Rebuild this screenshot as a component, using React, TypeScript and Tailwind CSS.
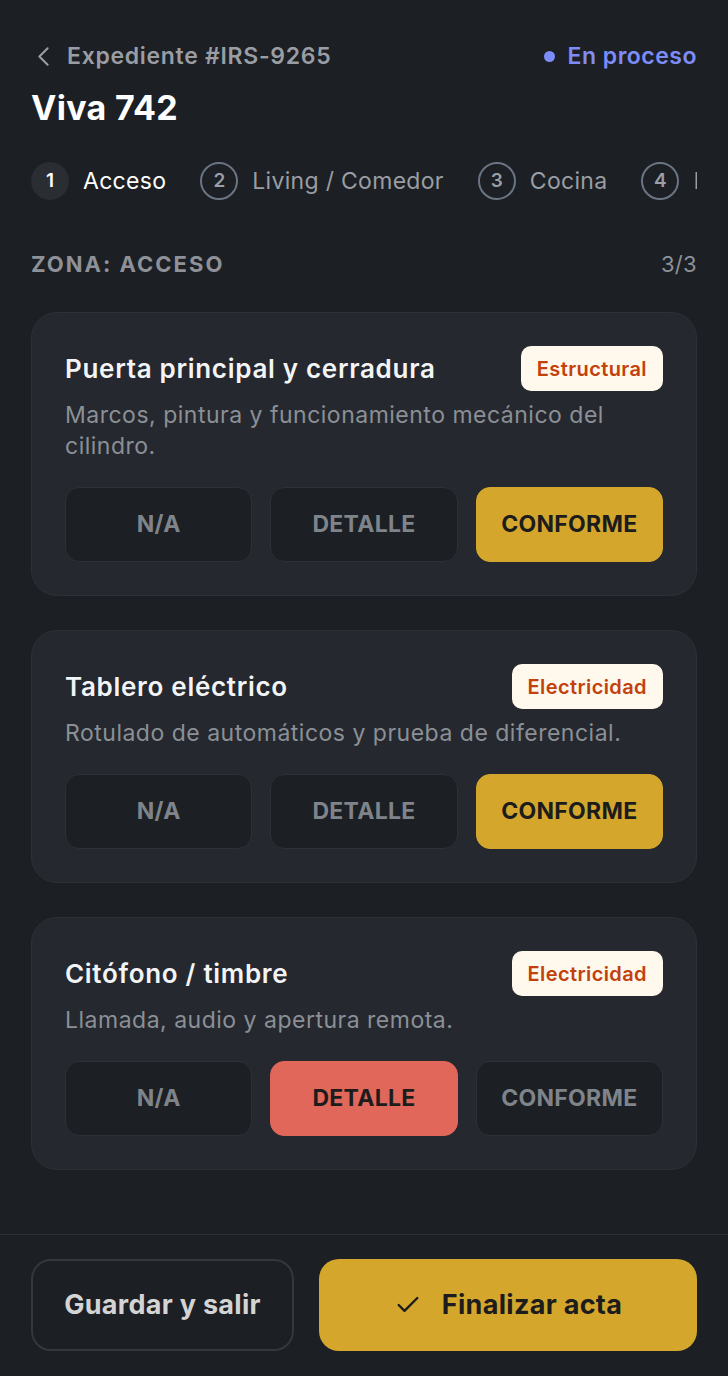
import { Check, ChevronLeft } from 'lucide-react';

type Estado = 'na' | 'detalle' | 'conforme';

interface Item {
  id: number;
  title: string;
  description: string;
  tag: string;
  estado: Estado;
}

const steps = ['Acceso', 'Living / Comedor', 'Cocina', 'Baño'];

const items: Item[] = [
  {
    id: 1,
    title: 'Puerta principal y cerradura',
    description: 'Marcos, pintura y funcionamiento mecánico del cilindro.',
    tag: 'Estructural',
    estado: 'conforme',
  },
  {
    id: 2,
    title: 'Tablero eléctrico',
    description: 'Rotulado de automáticos y prueba de diferencial.',
    tag: 'Electricidad',
    estado: 'conforme',
  },
  {
    id: 3,
    title: 'Citófono / timbre',
    description: 'Llamada, audio y apertura remota.',
    tag: 'Electricidad',
    estado: 'detalle',
  },
];

function OptionButton({ label, active, tone }: { label: string; active: boolean; tone: Estado }) {
  let cls = 'bg-[#1c1f23] border border-[#2d3036] text-[#7f848b]';
  if (active && tone === 'conforme') cls = 'bg-[#d4a72c] border border-[#d4a72c] text-[#1c1c1c]';
  if (active && tone === 'detalle') cls = 'bg-[#e0675a] border border-[#e0675a] text-[#1c1c1c]';
  return (
    <button className={`h-[75px] rounded-[14px] text-[23px] font-bold tracking-[0.3px] uppercase ${cls}`}>
      {label}
    </button>
  );
}

function ItemCard({ item }: { item: Item }) {
  return (
    <div className="rounded-[26px] border border-[#2d3036] bg-[#25282e] px-[33px] pt-[33px] pb-[33px]">
      <div className="flex items-center justify-between gap-4">
        <h3 className="text-[26px] font-semibold tracking-[0.7px] text-[#f3f4f6] leading-[32px]">{item.title}</h3>
        <span className="h-[45px] flex items-center px-[16px] rounded-[10px] bg-[#fff8ec] text-[20px] font-semibold tracking-[0.4px] text-[#c2410c]">
          {item.tag}
        </span>
      </div>
      <p className="mt-[9px] text-[23px] leading-[31px] tracking-[0.5px] text-[#8b9096]">{item.description}</p>
      <div className="mt-[25px] grid grid-cols-3 gap-[18px]">
        <OptionButton label="N/A" active={item.estado === 'na'} tone="na" />
        <OptionButton label="Detalle" active={item.estado === 'detalle'} tone="detalle" />
        <OptionButton label="Conforme" active={item.estado === 'conforme'} tone="conforme" />
      </div>
    </div>
  );
}

export default function App() {
  return (
    <main
      className="min-h-[1376px] flex flex-col bg-[#1c1f23]"
      style={{ fontFamily: 'Inter, "Noto Sans", sans-serif' }}
    >
      <div className="flex-1 px-[31px] pt-[42px]">
        {/* Header */}
        <div className="flex items-center justify-between h-[28px]">
          <div className="flex items-center gap-[7px] text-[#9a9da3]">
            <ChevronLeft size={33} strokeWidth={1.5} className="-ml-[4px]" />
            <span className="text-[23px] font-semibold tracking-[0.7px]">Expediente #IRS-9265</span>
          </div>
          <div className="flex items-center gap-[13px] text-[#7c8cf8]">
            <span className="w-[11px] h-[11px] rounded-full bg-[#7c8cf8]"></span>
            <span className="text-[23px] font-semibold tracking-[0.5px]">En proceso</span>
          </div>
        </div>
        <h1 className="mt-[18px] text-[34px] leading-[40px] font-bold tracking-[0.3px] text-white">Viva 742</h1>

        {/* Steps */}
        <div className="mt-[34px] overflow-hidden">
          <div className="flex items-center gap-[34px] whitespace-nowrap">
            {steps.map((s, i) => (
              <div key={s} className="flex items-center gap-[14px] shrink-0">
                {i === 0 ? (
                  <span className="w-[38px] h-[38px] rounded-full bg-[#2a2d32] flex items-center justify-center text-[19px] font-semibold text-white">
                    1
                  </span>
                ) : (
                  <span className="w-[38px] h-[38px] rounded-full border-2 border-[#6b7483] flex items-center justify-center text-[19px] font-semibold text-[#9a9fa7]">
                    {i + 1}
                  </span>
                )}
                <span className={`text-[23px] tracking-[0.3px] ${i === 0 ? 'text-white' : 'text-[#9a9da3]'}`}>{s}</span>
              </div>
            ))}
          </div>
        </div>

        {/* Zona */}
        <div className="mt-[50px] flex items-center justify-between h-[28px]">
          <span className="text-[22px] font-bold tracking-[2px] text-[#8e9197]">ZONA: ACCESO</span>
          <span className="text-[22px] tracking-[0.3px] text-[#8e9197]">3/3</span>
        </div>

        <div className="mt-[34px] flex flex-col gap-[34px]">
          {items.map((item) => (
            <ItemCard key={item.id} item={item} />
          ))}
        </div>
      </div>

      {/* Footer */}
      <div className="border-t border-[#2d3036] px-[31px] pt-[24px] pb-[25px] flex gap-[25px]">
        <button className="w-[263px] h-[92px] rounded-[20px] border-2 border-[#34373d] text-[27px] font-bold tracking-[0.3px] text-[#d4d4d4]">
          Guardar y salir
        </button>
        <button className="flex-1 h-[92px] rounded-[20px] bg-[#d4a72c] flex items-center justify-center gap-[20px] text-[27px] font-bold tracking-[0.3px] text-[#1c1c1c]">
          <Check size={28} strokeWidth={2} />
          Finalizar acta
        </button>
      </div>
    </main>
  );
}
